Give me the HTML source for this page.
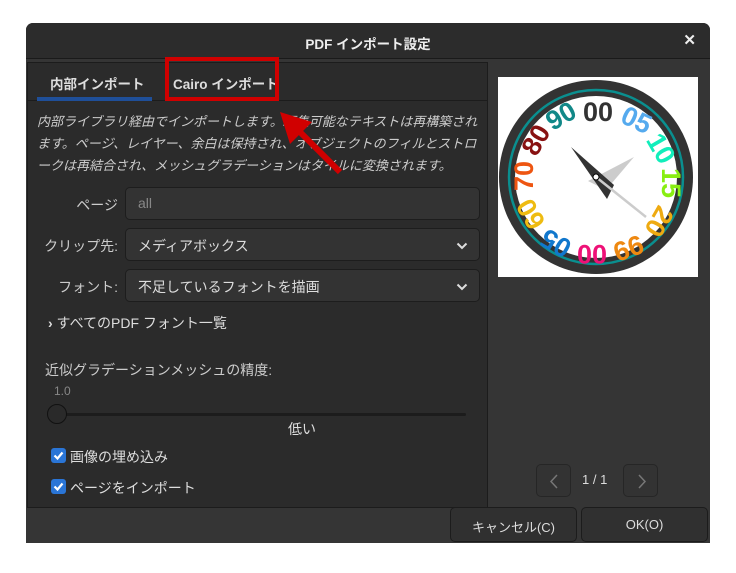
<!DOCTYPE html>
<html><head><meta charset="utf-8"><style>
*{box-sizing:border-box;margin:0;padding:0}
body{width:736px;height:573px;background:#fff;position:relative;overflow:hidden;font-family:"Liberation Sans","Noto Sans CJK JP",sans-serif;color:#ddd;font-size:14px}
.dlg{position:absolute;left:26px;top:23px;width:684px;height:520px;background:#353535;border-radius:7px 7px 0 0;overflow:hidden}
.hdr{position:absolute;left:0;top:0;width:684px;height:36px;background:#2c2c2c;border-bottom:1px solid #1a1a1a}
.title{position:absolute;left:0;right:0;top:10px;text-align:center;font-weight:bold;font-size:13.5px;color:#eee}
.x{position:absolute;right:14px;top:8px;font-size:15px;font-weight:bold;color:#eee}
.lp{position:absolute;left:1px;top:39px;width:461px;height:446px;background:#2b2b2b;border:1px solid #1c1c1c}
.tabs{position:absolute;left:0;top:0;width:459px;height:38px;border-bottom:1px solid #1c1c1c}
.tab{position:absolute;top:10px;font-weight:bold;font-size:13.5px;color:#ddd}
.desc{position:absolute;left:9px;top:48px;width:443px;font-style:italic;font-size:13px;line-height:22px;color:#ccc}
.lbl{position:absolute;text-align:right;font-size:14px;color:#ccc;width:90px}
.fld{position:absolute;left:97px;width:355px;height:33px;background:#333;border:1px solid #1d1d1d;border-radius:5px;font-size:14px;color:#ddd;padding:7px 0 0 12px}
.chev{position:absolute;right:11px;top:13px}
.cb{position:absolute;left:23px;width:15px;height:15px;background:#2a75d6;border-radius:3px}
.btn{position:absolute;top:484px;height:35px;background:#303030;border:1px solid #1c1c1c;border-radius:5px;text-align:center;padding-top:9px;font-size:13px;color:#ddd}
.nb{position:absolute;top:441px;width:35px;height:33px;border:1px solid #262626;border-radius:5px;background:#333}
</style></head><body>
<div class="dlg">
 <div class="hdr"><div class="title">PDF インポート設定</div><div class="x">✕</div></div>
 <div class="lp">
  <div class="tabs">
   <div class="tab" style="left:22px">内部インポート</div>
   <div style="position:absolute;left:9px;top:34px;width:115px;height:4px;background:#1f4f99"></div>
   <div class="tab" style="left:145px">Cairo インポート</div>
  </div>
  <div class="desc">内部ライブラリ経由でインポートします。編集可能なテキストは再構築されます。ページ、レイヤー、余白は保持され、オブジェクトのフィルとストロークは再結合され、メッシュグラデーションはタイルに変換されます。</div>
  <div class="lbl" style="top:132px;">ページ</div>
  <div class="fld" style="top:124px;color:#888">all</div>
  <div class="lbl" style="top:173px;">クリップ先:</div>
  <div class="fld" style="top:165px">メディアボックス<svg class="chev" width="12" height="8"><path d="M1.5 1.5 6 6 10.5 1.5" stroke="#ddd" stroke-width="2" fill="none"/></svg></div>
  <div class="lbl" style="top:214px;">フォント:</div>
  <div class="fld" style="top:206px">不足しているフォントを描画<svg class="chev" width="12" height="8"><path d="M1.5 1.5 6 6 10.5 1.5" stroke="#ddd" stroke-width="2" fill="none"/></svg></div>
  <div style="position:absolute;left:20px;top:250px;font-size:14px;color:#ddd"><b>›</b> すべてのPDF フォント一覧</div>
  <div style="position:absolute;left:17px;top:297px;font-size:14px;color:#ccc">近似グラデーションメッシュの精度:</div>
  <div style="position:absolute;left:26px;top:321px;font-size:12px;color:#888">1.0</div>
  <div style="position:absolute;left:30px;top:350px;width:408px;height:3px;background:#1c1c1c;border-radius:2px"></div>
  <div style="position:absolute;left:19px;top:341px;width:20px;height:20px;border-radius:50%;background:#2a2a2a;border:1px solid #111"></div>
  <div style="position:absolute;left:260px;top:356px;font-size:14px;color:#ddd">低い</div>
  <div class="cb" style="top:385px"><svg width="15" height="15"><path d="M3.5 7.5 6.5 10.5 11.5 4.5" stroke="#fff" stroke-width="2.2" fill="none"/></svg></div>
  <div style="position:absolute;left:42px;top:384px;color:#ddd">画像の埋め込み</div>
  <div class="cb" style="top:416px"><svg width="15" height="15"><path d="M3.5 7.5 6.5 10.5 11.5 4.5" stroke="#fff" stroke-width="2.2" fill="none"/></svg></div>
  <div style="position:absolute;left:42px;top:415px;color:#ddd">ページをインポート</div>
 </div>
 <div style="position:absolute;left:472px;top:54px;width:200px;height:200px;background:#fff">
  <svg width="200" height="200" viewBox="0 0 200 200">
   <circle cx="98" cy="100" r="97" fill="#333"/>
   <circle cx="98" cy="100" r="87" fill="none" stroke="#0a8f8f" stroke-width="2.5"/>
   <circle cx="98" cy="100" r="81" fill="#fff"/>
   <g font-family="Liberation Sans" font-weight="bold" font-size="27" text-anchor="middle">
    <text x="100" y="44" fill="#333">00</text>
    <text x="138" y="52" fill="#55aaee" transform="rotate(25 138 44)">05</text>
    <text x="162" y="80" fill="#11eebb" transform="rotate(60 162 72)">10</text>
    <text x="172" y="114" fill="#88ee11" transform="rotate(90 172 106)">15</text>
    <text x="160" y="152" fill="#eeaa11" transform="rotate(120 160 144)">20</text>
    <text x="130" y="178" fill="#ee8811" transform="rotate(160 130 170)">99</text>
    <text x="94" y="186" fill="#ee1177" transform="rotate(180 94 177)">00</text>
    <text x="58" y="175" fill="#1177cc" transform="rotate(210 58 166)">05</text>
    <text x="33" y="146" fill="#eebb11" transform="rotate(240 33 137)">60</text>
    <text x="26" y="108" fill="#ee5511" transform="rotate(270 26 99)">70</text>
    <text x="38" y="72" fill="#881111" transform="rotate(300 38 63)">80</text>
    <text x="63" y="48" fill="#118888" transform="rotate(330 63 39)">90</text>
   </g>
   <path d="M90 104 L136 80 L108 113 Z" fill="#ccc"/>
   <path d="M73 70 L116 108 L109 122 Z" fill="#333"/>
   <path d="M98 100 L148 140" stroke="#ccc" stroke-width="2.5"/>
   <circle cx="98" cy="100" r="3" fill="#fff" stroke="#000"/>
  </svg>
 </div>
 <div class="nb" style="left:510px"><svg width="35" height="33"><path d="M20 10 14 16.5 20 23" stroke="#777" stroke-width="1.5" fill="none"/></svg></div>
 <div style="position:absolute;left:556px;top:449px;font-size:13px;color:#ddd">1 / 1</div>
 <div class="nb" style="left:597px"><svg width="35" height="33"><path d="M15 10 21 16.5 15 23" stroke="#777" stroke-width="1.5" fill="none"/></svg></div>
 <div class="btn" style="left:424px;width:127px">キャンセル(C)</div>
 <div class="btn" style="left:555px;width:127px">OK(O)</div>
</div>
<div style="position:absolute;left:165px;top:57px;width:114px;height:44px;border:4px solid #d00000"></div>
<svg style="position:absolute;left:270px;top:100px" width="80" height="80"><path d="M70 72 L26 28" stroke="#d00000" stroke-width="6"/><path d="M10 12 L42 22 L20 44 Z" fill="#d00000"/></svg>
</body></html>
